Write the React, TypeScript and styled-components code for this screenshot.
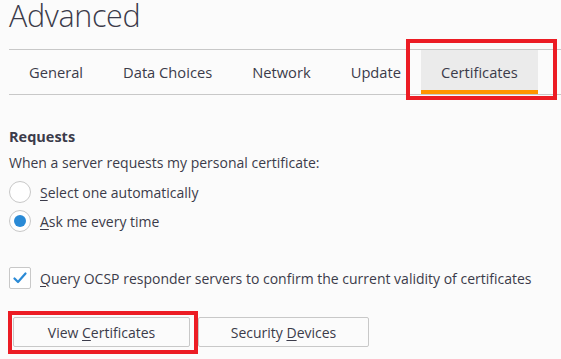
import { ReactNode } from "react";
import styled, { createGlobalStyle } from "styled-components";

const GlobalStyle = createGlobalStyle`
  html, body {
    margin: 0;
    padding: 0;
    background: #fbfbfb;
  }
  body {
    font-family: "Open Sans", "Noto Sans", sans-serif;
    color: #3b3b4a;
  }
`;

const Page = styled.div`
  position: relative;
  width: 561px;
  height: 359px;
  overflow: hidden;
  padding-left: 9px;
  box-sizing: border-box;
`;

const Title = styled.h1`
  margin: 0;
  height: 49px;
  box-sizing: border-box;
  font-size: 30.5px;
  font-weight: 300;
  line-height: 30px;
  letter-spacing: -0.35px;
`;

const TabBar = styled.div`
  display: flex;
  border-top: 1px solid #c8c8c8;
  border-bottom: 1px solid #c8c8c8;
`;

const Tab = styled.div<{ $active?: boolean }>`
  display: flex;
  align-items: center;
  box-sizing: border-box;
  height: 44px;
  padding: 4px 20px 0;
  font-size: 14.7px;
  background: ${(p) => (p.$active ? "#ebebeb" : "transparent")};
  border-bottom: 4px solid ${(p) => (p.$active ? "#ff9400" : "transparent")};
`;

const Section = styled.div`
  padding-top: 32px;
`;

const Heading = styled.div`
  font-size: 14.5px;
  font-weight: 700;
  line-height: 20px;
  margin-bottom: 6px;
`;

const Text = styled.div`
  font-size: 14px;
  line-height: 20px;
  margin-bottom: 8px;
`;

const Row = styled.label`
  display: flex;
  align-items: center;
  gap: 9px;
  height: 22px;
  font-size: 14px;
  margin-bottom: 7px;
`;

const Radio = styled.span<{ $checked?: boolean }>`
  position: relative;
  width: 22px;
  height: 22px;
  box-sizing: border-box;
  border: 1px solid #c8c8c8;
  border-radius: 50%;
  background: #fff;
  &::after {
    content: "";
    display: ${(p) => (p.$checked ? "block" : "none")};
    position: absolute;
    left: 4px;
    top: 4px;
    width: 12px;
    height: 12px;
    border-radius: 50%;
    background: #2a8ad6;
  }
`;

const Check = styled.span`
  display: flex;
  align-items: center;
  justify-content: center;
  width: 22px;
  height: 22px;
  box-sizing: border-box;
  border: 1px solid #c8c8c8;
  border-radius: 2px;
  background: #fff;
`;

const CheckRow = styled(Row)`
  margin-top: 35px;
  margin-bottom: 0;
`;

const Key = styled.span`
  text-decoration: underline;
  text-underline-offset: 2px;
`;

const Buttons = styled.div`
  display: flex;
  gap: 8px;
  margin: 28px 0 0 4px;
`;

const Button = styled.button<{ $w: number }>`
  width: ${(p) => p.$w}px;
  height: 30px;
  box-sizing: border-box;
  border: 1px solid #c8c8c8;
  border-radius: 2px;
  background: #fbfbfb;
  font-family: inherit;
  font-size: 14px;
  color: inherit;
  padding: 0;
`;

const Highlight = styled.div<{ $x: number; $y: number; $w: number; $h: number }>`
  position: absolute;
  left: ${(p) => p.$x}px;
  top: ${(p) => p.$y}px;
  width: ${(p) => p.$w}px;
  height: ${(p) => p.$h}px;
  box-sizing: border-box;
  border: 4px solid #ec1c24;
  pointer-events: none;
`;

const tabs = ["General", "Data Choices", "Network", "Update", "Certificates"];

function Option({ checked, k, rest }: { checked?: boolean; k: string; rest: ReactNode }) {
  return (
    <Row>
      <Radio $checked={checked} />
      <span>
        <Key>{k}</Key>
        {rest}
      </span>
    </Row>
  );
}

export default function App() {
  return (
    <>
      <GlobalStyle />
      <Page>
        <Title>Advanced</Title>
        <TabBar>
          {tabs.map((t) => (
            <Tab key={t} $active={t === "Certificates"}>
              {t}
            </Tab>
          ))}
        </TabBar>

        <Section>
          <Heading>Requests</Heading>
          <Text>When a server requests my personal certificate:</Text>
          <Option k="S" rest="elect one automatically" />
          <Option checked k="A" rest="sk me every time" />

          <CheckRow>
            <Check>
              <svg width="14" height="12" viewBox="0 0 14 12">
                <path
                  d="M1.5 6.5 L5 10 L12.5 1.5"
                  fill="none"
                  stroke="#2a8ad6"
                  strokeWidth="2.2"
                  strokeLinecap="round"
                  strokeLinejoin="round"
                />
              </svg>
            </Check>
            <span>
              <Key>Q</Key>uery OCSP responder servers to confirm the current validity of certificates
            </span>
          </CheckRow>

          <Buttons>
            <Button $w={177}>
              View <Key>C</Key>ertificates
            </Button>
            <Button $w={171}>
              Security <Key>D</Key>evices
            </Button>
          </Buttons>
        </Section>

        <Highlight $x={406} $y={39} $w={151} $h={61} />
        <Highlight $x={8} $y={311} $w={190} $h={43} />
      </Page>
    </>
  );
}
